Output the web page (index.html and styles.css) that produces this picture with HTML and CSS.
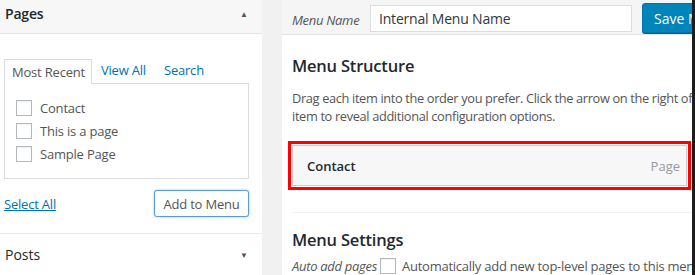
FILE: index.html
```html
<!DOCTYPE html>
<html>
<head>
<meta charset="utf-8">
<link rel="stylesheet" href="styles.css">
</head>
<body>
<div class="page">
  <aside class="side">
    <div class="acc-head open">
      <span class="acc-title">Pages</span>
      <span class="acc-arrow">&#9650;</span>
    </div>
    <div class="acc-body">
      <div class="tabs">
        <span class="tab active">Most Recent</span>
        <span class="tab">View All</span>
        <span class="tab">Search</span>
      </div>
      <div class="tab-panel">
        <label class="item"><span class="cb"></span>Contact</label>
        <label class="item"><span class="cb"></span>This is a page</label>
        <label class="item"><span class="cb"></span>Sample Page</label>
      </div>
      <div class="actions">
        <a class="select-all" href="#">Select All</a>
        <button class="btn">Add to Menu</button>
      </div>
    </div>
    <div class="acc-head closed">
      <span class="acc-title light">Posts</span>
      <span class="acc-arrow">&#9660;</span>
    </div>
  </aside>
  <div class="gutter"></div>
  <main class="menu">
    <div class="menu-head">
      <span class="menu-name-label">Menu Name</span>
      <span class="menu-name-input">Internal Menu Name</span>
      <button class="save">Save Menu</button>
    </div>
    <div class="menu-body">
      <h3 class="h3">Menu Structure</h3>
      <p class="desc">Drag each item into the order you prefer. Click the arrow on the right of the item to reveal additional configuration options.</p>
      <div class="menu-item">
        <span class="mi-title">Contact</span>
        <span class="mi-type">Page</span>
      </div>
      <div class="settings">
        <h3 class="h3">Menu Settings</h3>
        <div class="setting-row">
          <span class="setting-label">Auto add pages</span>
          <span class="cb small"></span>
          <span class="setting-text">Automatically add new top-level pages to this menu</span>
        </div>
      </div>
    </div>
  </main>
</div>
</body>
</html>
```

FILE: styles.css
```css
* { box-sizing: border-box; }
html, body { margin: 0; padding: 0; }
body {
  width: 695px;
  height: 275px;
  overflow: hidden;
  background: #f1f1f1;
  font-family: "Open Sans", "Noto Sans", sans-serif;
  font-size: 13px;
  color: #555;
}
.page {
  display: grid;
  grid-template-columns: 262px 20px 410px;
  height: 275px;
  border-right: 3px solid #1d1d1d;
}
.side {
  background: #fff;
  display: flex;
  flex-direction: column;
}
.acc-head {
  display: flex;
  justify-content: space-between;
  align-items: center;
}
.acc-head.open {
  height: 34px;
  background: #f7f7f7;
  border-bottom: 1px solid #e5e5e5;
  padding: 0 14px 6px 5px;
}
.acc-head.closed {
  height: 42px;
  border-top: 1px solid #e8e8e8;
  padding: 0 14px 0 5px;
  margin-top: 16px;
}
.acc-title {
  font-size: 14px;
  font-weight: 600;
  color: #23282d;
  letter-spacing: -0.2px;
}
.acc-title.light { font-weight: 400; letter-spacing: 0; }
.acc-arrow {
  font-size: 8px;
  color: #555;
}
.acc-body {
  padding: 25px 13px 0 4px;
}
.tabs {
  display: flex;
  align-items: flex-end;
  height: 24px;
}
.tab {
  color: #0073aa;
  padding: 0 9px 4px 9px;
  letter-spacing: -0.2px;
}
.tab.active {
  color: #555;
  border: 1px solid #ddd;
  border-bottom: none;
  background: #fff;
  height: 25px;
  padding: 3px 6px 0 7px;
  margin-bottom: -1px;
  position: relative;
}
.tab-panel {
  border: 1px solid #ddd;
  height: 96px;
  padding: 16px 11px 0 11px;
  display: flex;
  flex-direction: column;
  gap: 7px;
}
.item {
  display: flex;
  align-items: center;
  gap: 8px;
  height: 16px;
  letter-spacing: -0.2px;
}
.cb {
  display: inline-block;
  width: 16px;
  height: 16px;
  border: 1px solid #b4b9be;
  background: #fff;
  box-shadow: inset 0 1px 2px rgba(0,0,0,.07);
  flex: none;
}
.actions {
  display: flex;
  justify-content: space-between;
  align-items: center;
  margin-top: 11px;
}
.select-all {
  color: #0073aa;
  text-decoration: underline;
  letter-spacing: -0.2px;
}
.btn {
  font-family: inherit;
  font-size: 13px;
  color: #555;
  background: #fff;
  border: 1px solid #5b9dd9;
  border-radius: 3px;
  box-shadow: 0 0 2px rgba(30,140,190,.6);
  height: 27px;
  width: 95px;
  padding: 0;
  letter-spacing: -0.2px;
}
.gutter { background: #f1f1f1; }
.menu {
  background: #fff;
  display: flex;
  flex-direction: column;
  overflow: hidden;
}
.menu-head {
  height: 44px;
  background: #f5f5f5;
  border-bottom: 1px solid #e2e2e2;
  display: flex;
  align-items: flex-start;
  padding: 3px 0 0 10px;
  white-space: nowrap;
}
.menu-name-label {
  font-style: italic;
  color: #555;
  margin-top: 8px;
  width: 78px;
  flex: none;
  letter-spacing: -0.3px;
}
.menu-name-input {
  flex: none;
  width: 262px;
  height: 27px;
  margin-top: 2px;
  border: 1px solid #ddd;
  background: #fff;
  font-size: 14px;
  color: #32373c;
  padding: 3px 8px;
  letter-spacing: -0.2px;
}
.save {
  flex: none;
  margin-left: 10px;
  height: 30px;
  width: 80px;
  background: #0085ba;
  border: 1px solid #0073aa;
  border-radius: 3px;
  color: #fff;
  font-family: inherit;
  font-size: 14px;
  text-align: left;
  padding: 0 0 0 11px;
  box-shadow: 0 1px 0 #006799;
}
.menu-body {
  padding: 0 0 0 10px;
}
.h3 {
  margin: 0;
  font-size: 16.5px;
  font-weight: 600;
  color: #23282d;
  letter-spacing: -0.2px;
}
.menu-body > .h3 { margin-top: 19px; }
.desc {
  margin: 12px 0 0;
  line-height: 18px;
  width: 432px;
  font-size: 12.8px;
  letter-spacing: -0.35px;
  color: #555;
}
.menu-item {
  margin-top: 20px;
  width: 395px;
  height: 41px;
  border: 1px solid #ccc;
  background: #f7f7f7;
  display: flex;
  justify-content: space-between;
  align-items: center;
  padding: 0 6px 0 14px;
  outline: 3px solid #f00;
  outline-offset: 1px;
}
.mi-title {
  font-weight: 600;
  color: #23282d;
}
.mi-type { color: #999; }
.settings {
  margin-top: 26px;
  border-top: 1px solid #f2f2f2;
  padding-top: 15px;
}
.setting-row {
  display: flex;
  align-items: center;
  gap: 6px;
  margin-top: 6px;
  white-space: nowrap;
}
.setting-label {
  font-style: italic;
  width: 82px;
  letter-spacing: -0.3px;
}
.setting-text { letter-spacing: -0.25px; }
```
